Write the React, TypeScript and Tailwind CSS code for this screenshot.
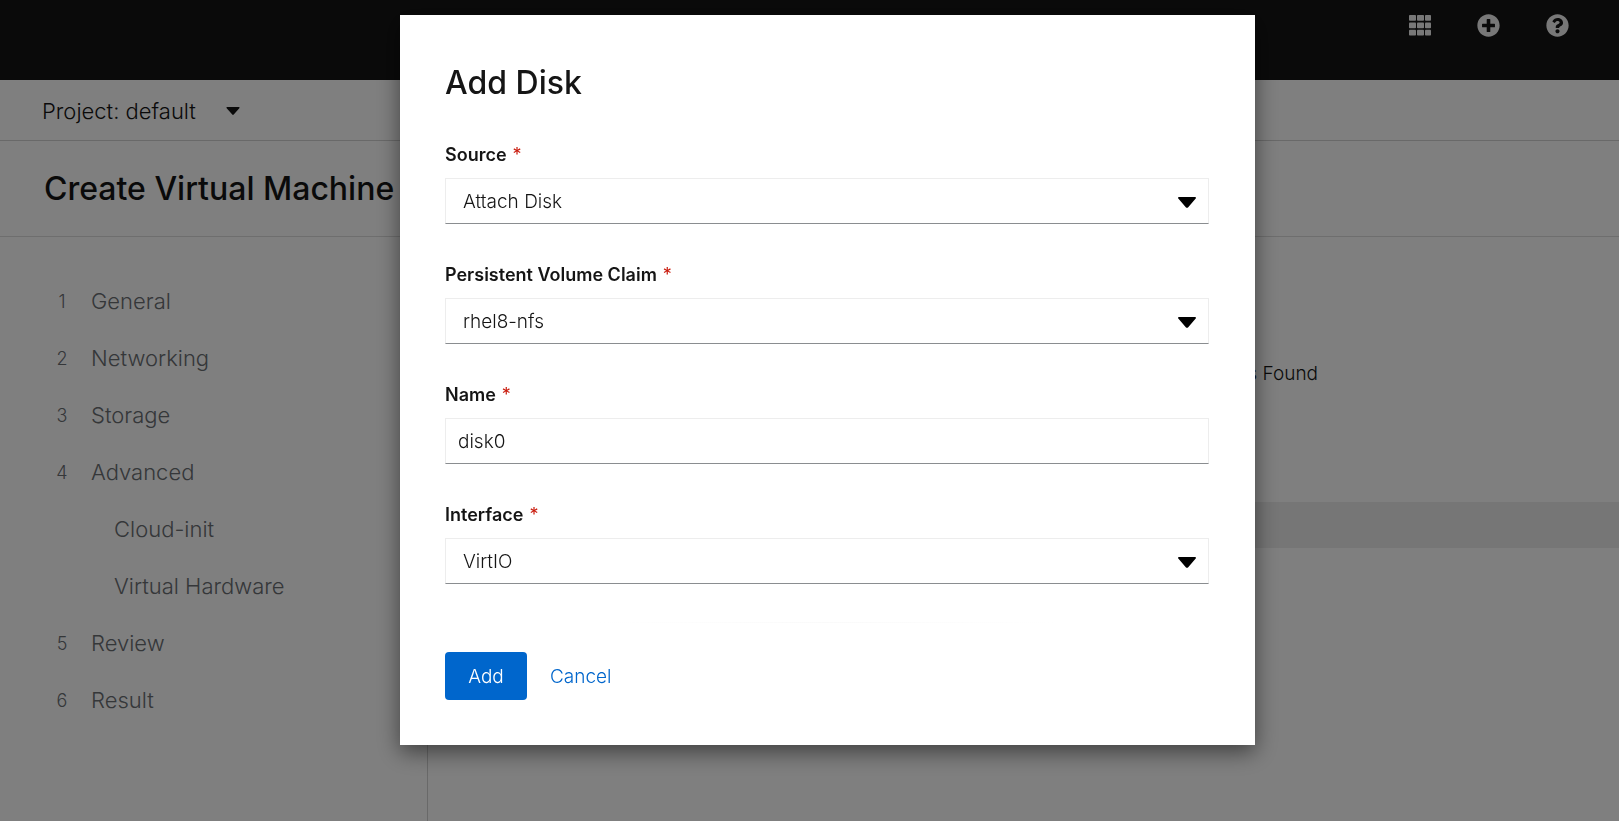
import { FaQuestionCircle, FaPlusCircle } from "react-icons/fa";

type Step = { number?: number; label: string };

const steps: Step[] = [
  { number: 1, label: "General" },
  { number: 2, label: "Networking" },
  { number: 3, label: "Storage" },
  { number: 4, label: "Advanced" },
  { label: "Cloud-init" },
  { label: "Virtual Hardware" },
  { number: 5, label: "Review" },
  { number: 6, label: "Result" },
];

function Caret({ className }: { className: string }) {
  return (
    <svg viewBox="0 0 18 11" className={className} fill="currentColor" aria-hidden="true">
      <path d="M.9 0h16.2c.8 0 1.2 1 .6 1.6L10 10.4c-.5.6-1.5.6-2 0L.3 1.6C-.3 1 .1 0 .9 0Z" />
    </svg>
  );
}

function GridIcon() {
  return (
    <svg viewBox="0 0 22 21" className="h-[21px] w-[22px]" fill="currentColor" aria-hidden="true">
      {[0, 7.4, 14.8].map((y) =>
        [0, 8, 16].map((x) => (
          <rect key={`${x}-${y}`} x={x} y={y} width={x === 16 ? 6 : 7} height="5.8" rx="0.8" />
        )),
      )}
    </svg>
  );
}

function FieldLabel({ id, text }: { id: string; text: string }) {
  return (
    <label htmlFor={id} className="flex h-6 items-center gap-1.5 text-lg font-semibold">
      {text}
      <span className="text-lg font-normal text-[#c9190b]">*</span>
    </label>
  );
}

const control =
  "h-[46px] w-full appearance-none rounded-none border border-[#ededed] border-b-[#8a8d90] bg-white text-[19px] font-light text-[#151515] outline-none";

function SelectField({ id, label, value }: { id: string; label: string; value: string }) {
  return (
    <div className="flex flex-col gap-[11px]">
      <FieldLabel id={id} text={label} />
      <div className="relative">
        <select id={id} className={`${control} px-[17px] pt-0.5`}>
          <option>{value}</option>
        </select>
        <Caret className="pointer-events-none absolute top-[19px] right-[13px] h-[11px] w-[18px] text-black" />
      </div>
    </div>
  );
}

function Modal() {
  return (
    <div className="fixed inset-0 flex items-start justify-center bg-black/50 pt-[15px] pl-9">
      <div
        role="dialog"
        aria-modal="true"
        aria-labelledby="modal-title"
        className="w-full max-w-[855px] bg-white pt-12 pr-[46px] pb-[45px] pl-[45px] shadow-[0_7px_21px_rgba(0,0,0,0.5)]"
      >
        <h2 id="modal-title" className="text-[32px] leading-10 font-medium">
          Add Disk
        </h2>
        <form className="mt-10" onSubmit={(e) => e.preventDefault()}>
          <div className="flex flex-col gap-[39px]">
            <SelectField id="source" label="Source" value="Attach Disk" />
            <SelectField id="pvc" label="Persistent Volume Claim" value="rhel8-nfs" />
            <div className="flex flex-col gap-[11px]">
              <FieldLabel id="name" text="Name" />
              <input id="name" type="text" defaultValue="disk0" className={`${control} px-3`} />
            </div>
            <SelectField id="interface" label="Interface" value="VirtIO" />
          </div>
          <div className="mt-[38px] h-px bg-linear-to-r from-white from-20% via-[#fafafa] to-white to-80%" />
          <div className="mt-[29px] flex items-center gap-[23px]">
            <button
              type="submit"
              className="h-12 w-[82px] rounded bg-[#0066cc] pt-0.5 text-[19px] font-light text-white"
            >
              Add
            </button>
            <button type="button" className="h-12 pt-0.5 text-[19px] font-light text-[#0066cc]">
              Cancel
            </button>
          </div>
        </form>
      </div>
    </div>
  );
}

export default function App() {
  return (
    <div className="flex min-h-screen flex-col bg-white font-['Inter','Open_Sans',sans-serif] text-[#151515]">
      <header className="flex h-20 items-start justify-end bg-[#151515] pt-3.5 pr-[50px] text-[#f0f0f0]">
        <div className="flex items-center gap-[46px]">
          <button type="button" aria-label="Applications">
            <GridIcon />
          </button>
          <button type="button" aria-label="Create">
            <FaPlusCircle className="size-[23px]" />
          </button>
          <button type="button" aria-label="Help">
            <FaQuestionCircle className="size-[23px]" />
          </button>
        </div>
      </header>
      <div className="flex h-[61px] items-center border-b border-[#d2d2d2] px-[42px] pt-0.5">
        <button type="button" className="flex items-center gap-[30px] text-[22px] font-light">
          Project: default
          <Caret className="h-2 w-[14px]" />
        </button>
      </div>
      <div className="flex h-24 items-center border-b border-[#dcdcdc] px-11">
        <h1 className="text-[32px] font-medium">Create Virtual Machine</h1>
      </div>
      <div className="flex flex-1">
        <nav aria-label="Wizard steps" className="w-[428px] shrink-0 border-r border-[#d2d2d2] pt-9">
          <ol>
            {steps.map((step) => (
              <li key={step.label}>
                <a
                  href="#"
                  className={`flex h-[57px] items-center font-light text-[#6a6e73] ${step.number ? "pl-[51px]" : "pl-[114px]"}`}
                >
                  {step.number && <span className="mr-[18px] w-[22px] text-center text-lg">{step.number}</span>}
                  <span className="text-[22px]">{step.label}</span>
                </a>
              </li>
            ))}
          </ol>
        </nav>
        <main className="flex flex-1 flex-col pt-[123px]">
          <p className="w-full max-w-[890px] text-right text-[19px] leading-7 font-light">No Disks Found</p>
          <div className="mt-[114px] h-[46px] bg-[#ededed]" />
        </main>
      </div>
      <Modal />
    </div>
  );
}
